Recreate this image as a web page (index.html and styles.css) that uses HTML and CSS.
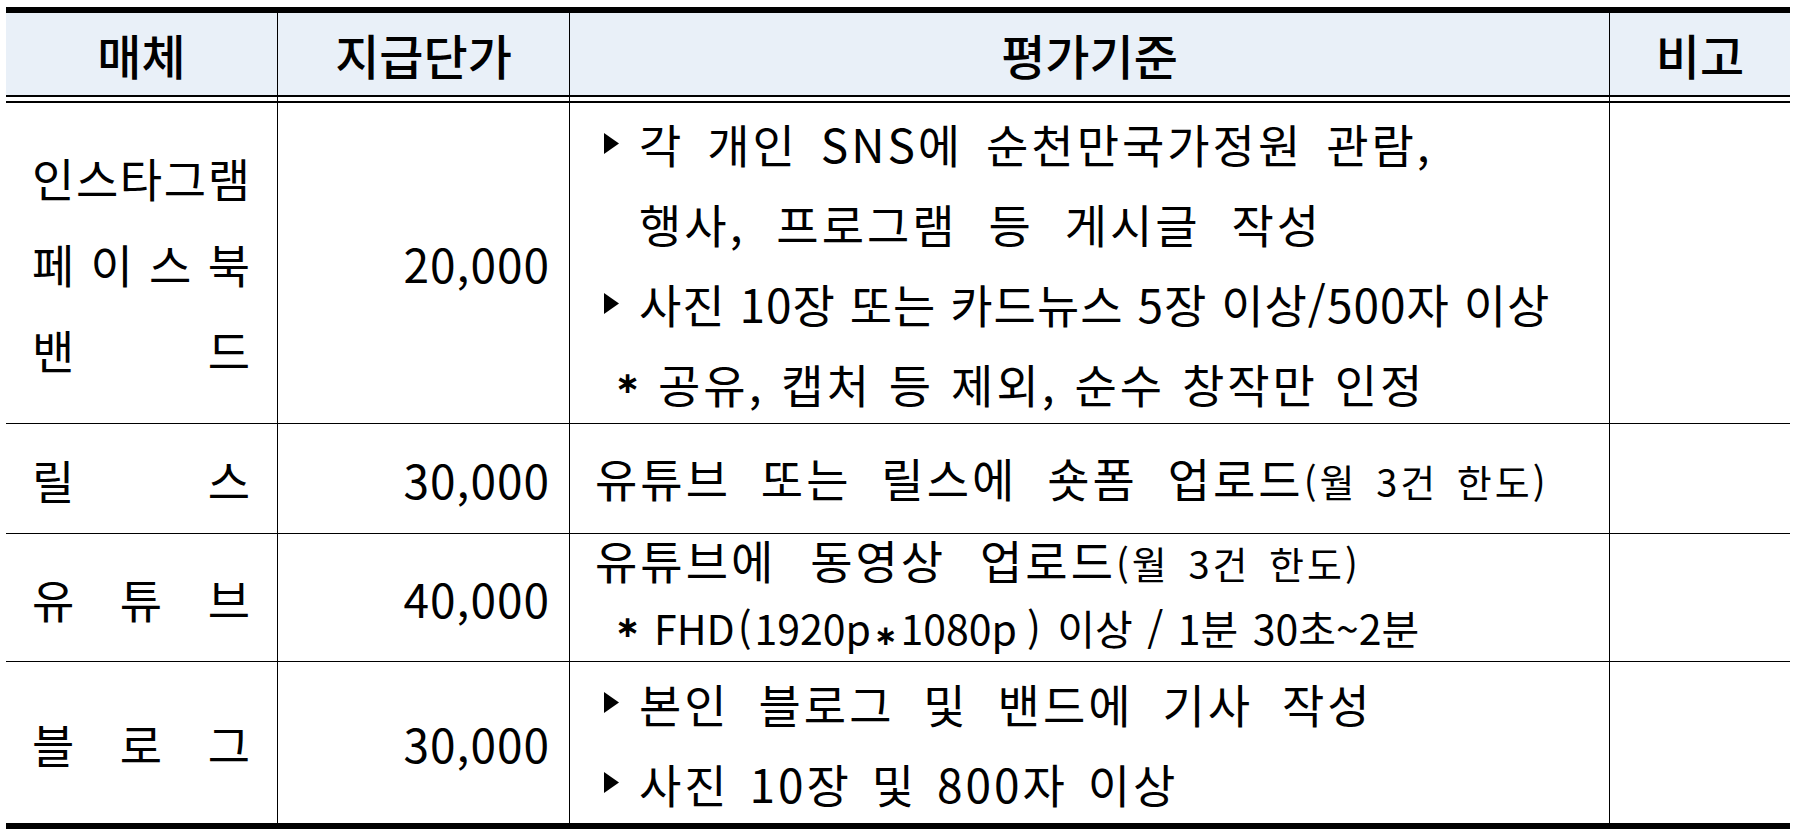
FILE: index.html
```html
<!DOCTYPE html>
<html lang="ko">
<head>
<meta charset="utf-8">
<title>매체별 지급단가</title>
<link rel="stylesheet" href="styles.css">
</head>
<body>
<div class="sheet">
  <div class="cell head">매체</div>
  <div class="cell head">지급단가</div>
  <div class="cell head">평가기준</div>
  <div class="cell head last">비고</div>

  <div class="sep"></div>
  <div class="sep"></div>
  <div class="sep"></div>
  <div class="sep last"></div>

  <div class="cell name row r1">
    <div class="spread"><span>인</span><span>스</span><span>타</span><span>그</span><span>램</span></div>
    <div class="spread"><span>페</span><span>이</span><span>스</span><span>북</span></div>
    <div class="spread"><span>밴</span><span>드</span></div>
  </div>
  <div class="cell price row">20,000</div>
  <div class="cell crit row">
    <div class="item"><span class="mark"><svg width="15" height="21" viewBox="0 0 15 21"><polygon points="0,0 15,10.5 0,21"/></svg></span><span class="txt"><span class="ln l1">각 개인 SNS에 순천만국가정원 관람,</span><span class="ln l2">행사, 프로그램 등 게시글 작성</span></span></div>
    <div class="item"><span class="mark"><svg width="15" height="21" viewBox="0 0 15 21"><polygon points="0,0 15,10.5 0,21"/></svg></span><span class="txt l3">사진 10장 또는 카드뉴스 5장 이상/500자 이상</span></div>
    <div class="item"><span class="smark">∗</span><span class="txt l4">공유, 캡처 등 제외, 순수 창작만 인정</span></div>
  </div>
  <div class="cell row last"></div>

  <div class="cell name row">
    <div class="spread"><span>릴</span><span>스</span></div>
  </div>
  <div class="cell price row">30,000</div>
  <div class="cell crit row">
    <div class="plain l5">유튜브 또는 릴스에 숏폼 업로드<small>(월 3건 한도)</small></div>
  </div>
  <div class="cell row last"></div>

  <div class="cell name row">
    <div class="spread"><span>유</span><span>튜</span><span>브</span></div>
  </div>
  <div class="cell price row">40,000</div>
  <div class="cell crit row r3">
    <div class="plain l6">유튜브에 동영상 업로드<small>(월 3건 한도)</small></div>
    <div class="item fhd"><span class="smark">∗</span><span class="txt l7">FHD<span class="po">(</span>1920p<span class="times">∗</span>1080p<span class="pc">)</span> 이상 / 1분 30초~2분</span></div>
  </div>
  <div class="cell row last"></div>

  <div class="cell name end">
    <div class="spread"><span>블</span><span>로</span><span>그</span></div>
  </div>
  <div class="cell price end">30,000</div>
  <div class="cell crit end">
    <div class="item"><span class="mark"><svg width="15" height="21" viewBox="0 0 15 21"><polygon points="0,0 15,10.5 0,21"/></svg></span><span class="txt l8">본인 블로그 및 밴드에 기사 작성</span></div>
    <div class="item"><span class="mark"><svg width="15" height="21" viewBox="0 0 15 21"><polygon points="0,0 15,10.5 0,21"/></svg></span><span class="txt l9">사진 10장 및 800자 이상</span></div>
  </div>
  <div class="cell end last"></div>
</div>
</body>
</html>
```

FILE: styles.css
```css
html, body {
  margin: 0;
  padding: 0;
  background: #ffffff;
}

body {
  font-family: "Noto Sans CJK KR", "Noto Sans", sans-serif;
  color: #000000;
}

.sheet {
  margin: 7px 0 0 6px;
  width: 1784px;
  display: grid;
  grid-template-columns: 272px 292px 1040px 180px;
  grid-template-rows: 82px 8px 321px 110px 128px 161px;
  border-top: 6px solid #000;
  border-bottom: 6px solid #000;
}

.cell {
  box-sizing: border-box;
  border-right: 1px solid #000;
  display: flex;
  flex-direction: column;
  justify-content: center;
  font-size: 46px;
  line-height: 80px;
}

.cell.last {
  border-right: none;
}

.row {
  border-bottom: 1px solid #000;
}

.head {
  background: #e9f0f8;
  align-items: center;
  font-size: 48px;
  font-weight: 500;
  line-height: 60px;
}

.sep {
  box-sizing: border-box;
  border-top: 2px solid #000;
  border-bottom: 2px solid #000;
  border-right: 1px solid #000;
}

.sep.last {
  border-right: none;
}

.name {
  padding: 0 27px 0 26px;
}

.name.r1 {
  line-height: 86px;
}

.spread {
  display: flex;
  justify-content: space-between;
}

.price {
  text-align: right;
  padding-right: 19px;
  letter-spacing: 1px;
}

.crit {
  padding-left: 25px;
  letter-spacing: 3px;
}

.item {
  display: flex;
  align-items: flex-start;
}

.txt {
  display: flex;
  flex-direction: column;
}

.ln {
  display: block;
}

.mark {
  flex: none;
  width: 35px;
  height: 80px;
  margin-left: 9px;
  display: flex;
  align-items: center;
}

.mark svg {
  display: block;
  fill: #000;
}

.smark {
  flex: none;
  width: 43px;
  margin-left: 20px;
  font-family: "DejaVu Sans", sans-serif;
  font-size: 30px;
  font-weight: bold;
  letter-spacing: 0;
}

.l1 { word-spacing: 7px; }
.l2 { word-spacing: 15px; }
.l3 { word-spacing: 0; letter-spacing: 1px; display: block; }
.l4 { word-spacing: 1px; display: block; }
.l5 { word-spacing: 14px; }
.l6 { word-spacing: 18px; }
.l8 { word-spacing: 13px; display: block; }
.l9 { word-spacing: 4px; display: block; }

small {
  font-size: 38px;
  word-spacing: 5px;
}

.r3 {
  line-height: 64px;
}

.fhd {
  font-size: 41px;
}

.fhd .smark {
  width: 39px;
}

.l7 {
  display: block;
  word-spacing: 3px;
  letter-spacing: 0;
}

.po {
  margin: 0 3px 0 3px;
}

.pc {
  margin: 0 2px 0 10px;
}

.times {
  font-family: "DejaVu Sans", sans-serif;
  font-size: 28px;
  font-weight: bold;
  margin: 0 3px;
}
```
